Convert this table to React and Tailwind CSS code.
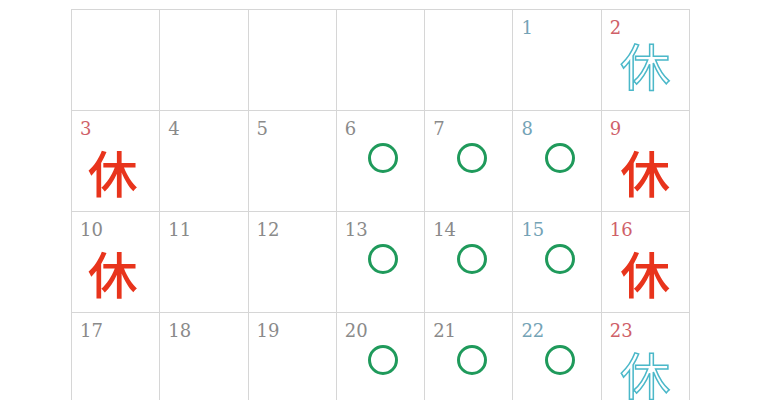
const weeks = [
  [null, null, null, null, null, { d: 1, mark: null }, { d: 2, mark: 'closedLight', up: true }],
  [
    { d: 3, mark: 'closed', holiday: true, left: true },
    { d: 4 },
    { d: 5 },
    { d: 6, mark: 'open' },
    { d: 7, mark: 'open' },
    { d: 8, mark: 'open' },
    { d: 9, mark: 'closed' },
  ],
  [
    { d: 10, mark: 'closed', left: true },
    { d: 11 },
    { d: 12 },
    { d: 13, mark: 'open' },
    { d: 14, mark: 'open' },
    { d: 15, mark: 'open' },
    { d: 16, mark: 'closed' },
  ],
  [
    { d: 17 },
    { d: 18 },
    { d: 19 },
    { d: 20, mark: 'open' },
    { d: 21, mark: 'open' },
    { d: 22, mark: 'open' },
    { d: 23, mark: 'closedLight' },
  ],
];

function numColor(col, day) {
  if (day.holiday || col === 6) return 'text-[#cf6068]';
  if (col === 5) return 'text-[#74a3b6]';
  return 'text-[#8a8a8a]';
}

function Mark({ day }) {
  if (day.mark === 'open') {
    return (
      <div className="flex justify-center mt-[3px] pl-[6px]">
        <div className="w-[30px] h-[30px] rounded-full border-[3px] border-[#1f9a5b]" />
      </div>
    );
  }
  if (day.mark === 'closed') {
    return (
      <div
        className={`flex justify-center ${day.left ? 'pr-[6px]' : ''} mt-[6px] text-[50px] leading-none font-medium text-[#e8341c] [font-family:'Noto_Sans_CJK_JP',sans-serif]`}
      >
        休
      </div>
    );
  }
  if (day.mark === 'closedLight') {
    return (
      <div
        className={`flex justify-center ${day.up ? 'mt-0' : 'mt-[6px]'} text-[50px] leading-none font-normal text-white [-webkit-text-stroke:1.5px_#4bb8c9] [font-family:'Noto_Sans_CJK_JP',sans-serif]`}
      >
        休
      </div>
    );
  }
  return null;
}

export default function App() {
  return (
    <div className="w-[760px] h-[400px] overflow-hidden bg-white pt-[9px] pl-[71px]">
      <div className="w-[619px] border-t border-l border-[#d6d6d6]">
        {weeks.map((week, r) => (
          <div key={r} className="grid grid-cols-7">
            {week.map((day, c) => (
              <div key={c} className="h-[101px] border-r border-b border-[#d6d6d6] pt-[7px] px-[8px]">
                {day && (
                  <>
                    <div className={`text-[18px] leading-[22px] [font-family:'DejaVu_Serif',serif] ${numColor(c, day)}`}>
                      {day.d}
                    </div>
                    <Mark day={day} />
                  </>
                )}
              </div>
            ))}
          </div>
        ))}
      </div>
    </div>
  );
}
